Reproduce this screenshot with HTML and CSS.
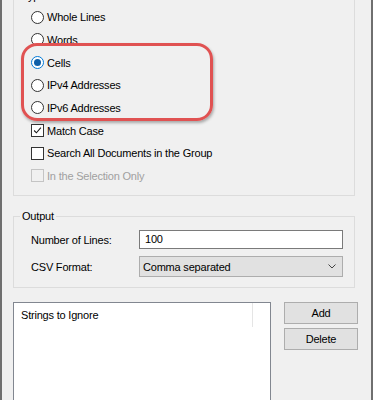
FILE: index.html
```html
<!DOCTYPE html>
<html lang="en">
<head>
  <meta charset="UTF-8">
  <title>Find Duplicates - Options</title>
  <link rel="stylesheet" href="styles.css">
</head>
<body>
  <div class="window">

    <!-- Compare mode -->
    <fieldset class="group group-type">
      <legend>Type</legend>
      <label class="opt"><span class="radio"></span>Whole Lines</label>
      <label class="opt"><span class="radio"></span>Words</label>
      <label class="opt"><span class="radio checked"></span>Cells</label>
      <label class="opt"><span class="radio"></span>IPv4 Addresses</label>
      <label class="opt"><span class="radio"></span>IPv6 Addresses</label>
      <label class="opt">
        <span class="check">
          <svg viewBox="0 0 13 13"><polyline points="2.5,6.5 5.2,9.2 10.5,3.2" fill="none" stroke="#1a1a1a" stroke-width="1.3"/></svg>
        </span>Match Case
      </label>
      <label class="opt"><span class="check"></span>Search All Documents in the Group</label>
      <label class="opt disabled"><span class="check"></span>In the Selection Only</label>
    </fieldset>

    <!-- Output options -->
    <fieldset class="group group-output">
      <legend>Output</legend>
      <div class="field">
        <span class="field-label">Number of Lines:</span>
        <div class="textbox">100</div>
      </div>
      <div class="field">
        <span class="field-label">CSV Format:</span>
        <div class="combo">
          <span>Comma separated</span>
          <svg viewBox="0 0 8 5"><polyline points="0.5,0.5 4,4 7.5,0.5" fill="none" stroke="#444" stroke-width="1"/></svg>
        </div>
      </div>
    </fieldset>

    <!-- Ignore list -->
    <div class="lists">
      <div class="listview">
        <div class="list-header">
          <div class="col">Strings to Ignore</div>
        </div>
      </div>
      <div class="buttons">
        <button>Add</button>
        <button>Delete</button>
      </div>
    </div>

    <div class="highlight"></div>
  </div>
</body>
</html>
```

FILE: styles.css
```css
/* Dialog base */
body {
  margin: 0;
  background: #f0f0f0;
  font-family: 'Liberation Sans', Arial, sans-serif;
  font-size: 11px;
  letter-spacing: -0.2px;
  color: #000;
}

.window {
  position: relative;
  width: 373px;
  height: 400px;
  box-sizing: border-box;
  padding-left: 11px;
  border-left: 2px solid #6f6f6f;
  border-right: 2px solid #6f6f6f;
  background: #f0f0f0;
  overflow: hidden;
}

/* Group boxes */
.group {
  width: 342px;
  box-sizing: border-box;
  margin: 0;
  padding: 3px 0 8px 0;
  border: 1px solid #dcdcdc;
}

.group legend {
  margin-left: 6px;
  padding: 0 2px;
  line-height: 14px;
}

.group-type {
  margin-top: -11px;
}

.group-output {
  margin-top: 13px;
  padding: 5px 0 9px 0;
}

/* Radio and check rows */
.opt {
  display: flex;
  align-items: center;
  height: 22.65px;
  margin-left: 17px;
  gap: 3px;
}

.radio,
.check {
  width: 13px;
  height: 13px;
  box-sizing: border-box;
  border: 1px solid #333;
  background: #fff;
  flex-shrink: 0;
}

.radio {
  border-radius: 50%;
  display: flex;
  justify-content: center;
  align-items: center;
}

.radio.checked {
  border-color: #0078d7;
}

.radio.checked::after {
  content: '';
  width: 7px;
  height: 7px;
  border-radius: 50%;
  background: #0f5fa8;
}

.check svg {
  display: block;
  width: 11px;
  height: 11px;
}

.opt.disabled {
  color: #a0a0a0;
}

.opt.disabled .check {
  border-color: #c4c4c4;
  background: #f0f0f0;
}

/* Output fields */
.field {
  display: flex;
  align-items: center;
  height: 23px;
  margin-left: 17px;
}

.field + .field {
  margin-top: 4px;
}

.field-label {
  width: 108px;
}

.textbox {
  width: 204px;
  height: 19px;
  box-sizing: border-box;
  border: 1px solid #7a7a7a;
  background: #fff;
  padding-left: 5px;
  line-height: 17px;
}

.combo {
  width: 204px;
  height: 21px;
  box-sizing: border-box;
  border: 1px solid #adadad;
  background: #e1e1e1;
  padding: 0 6px 0 3px;
  display: flex;
  align-items: center;
  justify-content: space-between;
}

.combo svg {
  width: 8px;
  height: 5px;
}

/* List and buttons */
.lists {
  display: flex;
  align-items: flex-start;
  gap: 13px;
  margin-top: 14px;
}

.listview {
  width: 258px;
  height: 130px;
  box-sizing: border-box;
  border: 1px solid #828790;
  background: #fff;
}

.list-header {
  display: flex;
  height: 24px;
}

.list-header .col {
  width: 239px;
  box-sizing: border-box;
  padding-left: 7px;
  line-height: 24px;
  border-right: 1px solid #e5e5e5;
}

.buttons {
  display: flex;
  flex-direction: column;
  gap: 4px;
}

.buttons button {
  width: 74px;
  height: 22px;
  margin: 0;
  padding: 0;
  border: 1px solid #adadad;
  background: #e1e1e1;
  font-family: inherit;
  font-size: 11px;
  letter-spacing: -0.2px;
  color: #000;
}

/* Red annotation drawn over the radio options */
.highlight {
  position: absolute;
  left: 19px;
  top: 43px;
  width: 192px;
  height: 78px;
  box-sizing: border-box;
  border: 3px solid #e05252;
  border-radius: 16px;
  box-shadow: 1px 2px 3px rgba(0, 0, 0, 0.3);
}
```
